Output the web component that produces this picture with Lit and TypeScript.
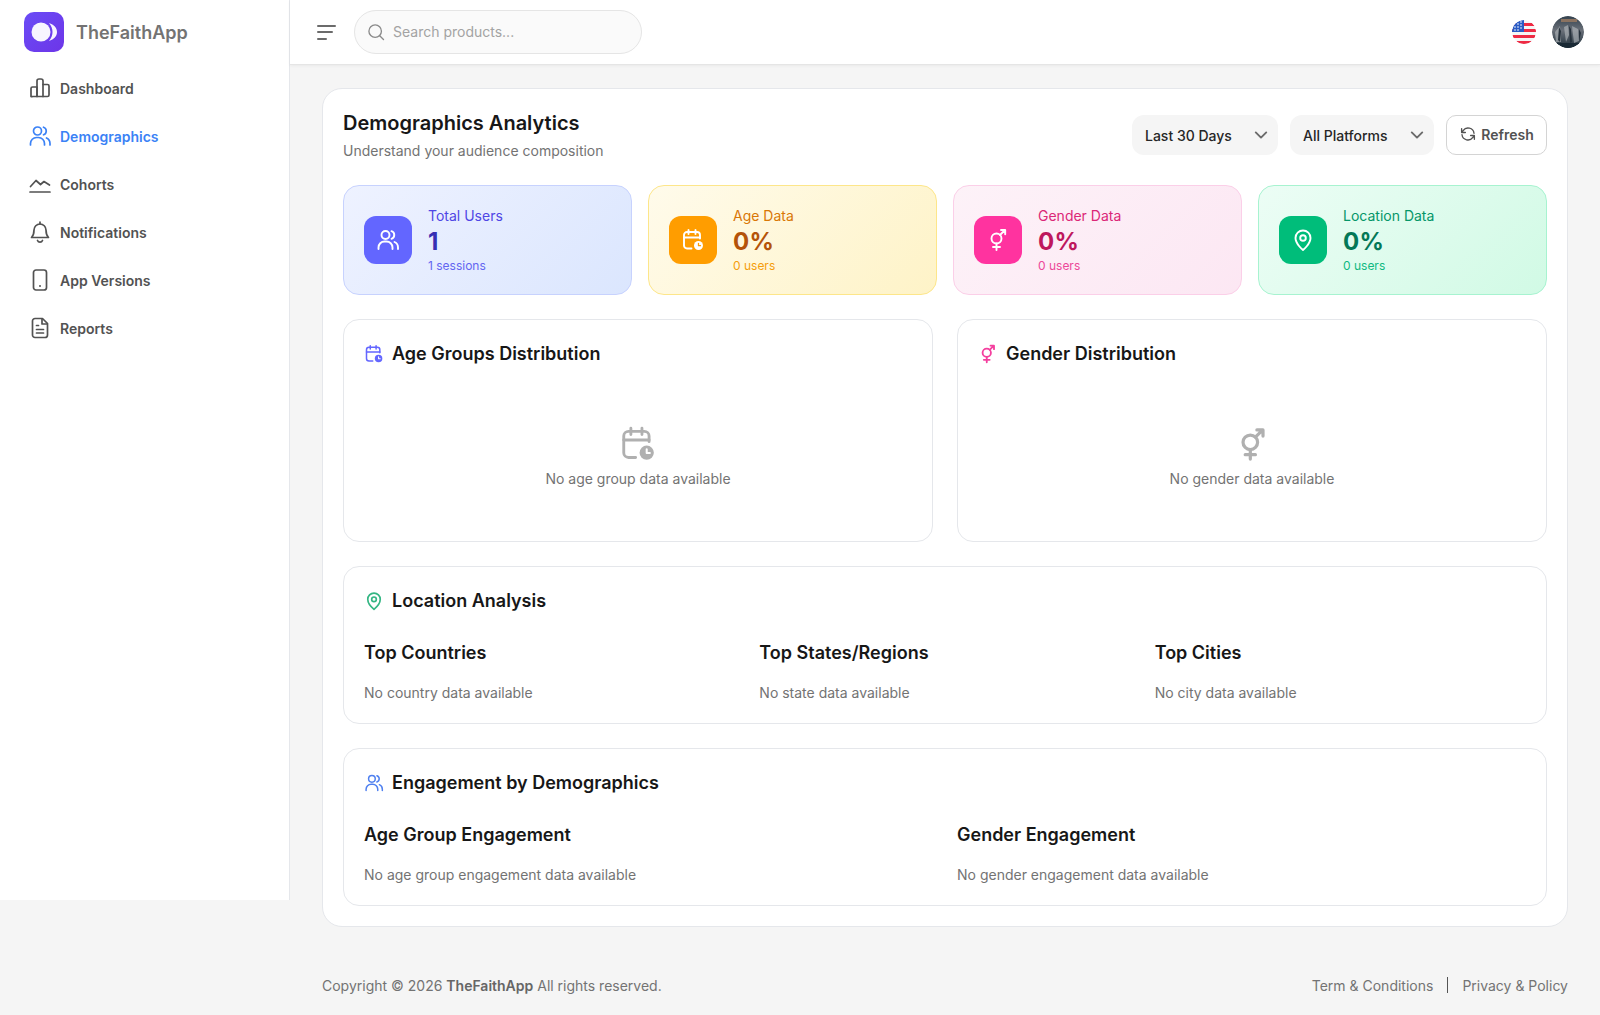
import { LitElement, html, css, svg } from "lit";
import { customElement } from "lit/decorators.js";

const ic = (body: unknown, size = 24, sw = 1.5, cls = "") => html`<svg class=${cls} width=${size} height=${size} viewBox="0 0 24 24" fill="none" stroke="currentColor" stroke-width=${sw} stroke-linecap="round" stroke-linejoin="round">${body}</svg>`;

const bars = svg`<path d="M3 20.5V12.5a1.5 1.5 0 0 1 1.5-1.5H9v9.5H4.500A1.500 1.500 0 0 1 3 20.500z"/><path d="M9 20.500V5a2 2 0 0 1 2-2h2a2 2 0 0 1 2 2v15.500z"/><path d="M15 8.500h4.500A1.500 1.500 0 0 1 21 10v9a1.500 1.500 0 0 1-1.500 1.500H15"/>`;
const users = svg`<circle cx="9.500" cy="7" r="4"/><path d="M2.500 21v-1.500a6 6 0 0 1 6-6h2a6 6 0 0 1 6 6V21"/><path d="M15.500 3.200a4 4 0 0 1 0 7.600"/><path d="M18.500 14a6 6 0 0 1 3.500 5.500V21"/>`;
const trend = svg`<path d="M2 20h20"/><path d="M2.500 14.500 8 8.500l4.500 4 3.500-3 5.500 3.500"/>`;
const bell = svg`<path d="M6 10a6 6 0 0 1 12 0c0 5 1.500 6.500 2.500 7.500h-17C4.500 16.500 6 15 6 10z"/><path d="M12 2v2"/><path d="M9.500 20.500a2.700 2.700 0 0 0 5 0"/>`;
const phone = svg`<rect x="5.500" y="2" width="13" height="20" rx="2.500"/><path d="M12 18h.01" stroke-width="2"/>`;
const report = svg`<path d="M14.500 2.500H7A2.500 2.500 0 0 0 4.500 5v14A2.500 2.500 0 0 0 7 21.500h10a2.500 2.500 0 0 0 2.500-2.500V7.500z"/><path d="M14 3v5h5"/><path d="M8.500 9.500h2M8.500 13.500h7M8.500 17h7"/>`;
const calClock = svg`<path d="M10.500 20.500H6a3 3 0 0 1-3-3V7a3 3 0 0 1 3-3h10a3 3 0 0 1 3 3v3.500"/><path d="M7.500 2v4M14.500 2v4M3 9.500h16"/><circle cx="17.500" cy="17.500" r="4.500" fill="currentColor" stroke="none"/><path d="M17.500 15.300v2.400h2" stroke="var(--hole,#fff)" stroke-width="1.300"/>`;
const gender = svg`<circle cx="10.500" cy="10.500" r="5"/><path d="M14 7l5-5M15 2h4.200v4.200M10.500 15.500V22M7 19h7"/>`;
const pin = svg`<path d="M12 22s-7.500-6-7.500-12a7.500 7.500 0 0 1 15 0c0 6-7.500 12-7.500 12z"/><circle cx="12" cy="10" r="2.800"/>`;
const refresh = svg`<path d="M20 11a8 8 0 0 0-14.500-3.500L3.500 10M3.500 5v5h5"/><path d="M4 13a8 8 0 0 0 14.500 3.500l2-2.500M20.500 19v-5h-5"/>`;
const search = svg`<circle cx="11" cy="11" r="7.500"/><path d="m21 21-4.500-4.500"/>`;
const chevron = svg`<path d="m5 8.500 7 7 7-7"/>`;

const NAV: [string, unknown, boolean][] = [
  ["Dashboard", bars, false],
  ["Demographics", users, true],
  ["Cohorts", trend, false],
  ["Notifications", bell, false],
  ["App Versions", phone, false],
  ["Reports", report, false],
];

const STATS = [
  { k: "blue", label: "Total Users", value: "1", sub: "1 sessions", icon: users },
  { k: "amber", label: "Age Data", value: "0%", sub: "0 users", icon: calClock },
  { k: "pink", label: "Gender Data", value: "0%", sub: "0 users", icon: gender },
  { k: "green", label: "Location Data", value: "0%", sub: "0 users", icon: pin },
];

@customElement("app-root")
export class AppRoot extends LitElement {
  static styles = css`
    :host { display: block; min-height: 1015px; background: #f5f5f5; font-family: Inter, "Liberation Sans", sans-serif; color: #111827; }
    * { box-sizing: border-box; }
    .app { display: grid; grid-template-columns: 290px 1fr; min-height: 1015px; }
    .side { height: 900px; background: #fff; border-right: 1px solid #e5e7eb; padding: 12px 0 0 24px; }
    .brand { display: flex; align-items: center; gap: 12px; height: 40px; font-size: 18px; font-weight: 600; color: #737373; }
    .logo { width: 40px; height: 40px; border-radius: 10px; background: linear-gradient(135deg, #6a4cf6, #6d35e8); display: block; }
    .nav { display: flex; flex-direction: column; margin-top: 12px; }
    .nav a { height: 48px; display: flex; align-items: center; gap: 8px; padding-left: 4px; font-size: 14px; font-weight: 600; color: #525252; }
    .nav a.on { color: #3b82f6; }
    .main { display: flex; flex-direction: column; min-width: 0; }
    .top { height: 65px; background: #fff; border-bottom: 1px solid #e5e5e5; box-shadow: 0 1px 3px rgba(0,0,0,.05); display: flex; align-items: center; padding: 0 16px 0 27px; gap: 18px; }
    .burger { display: flex; flex-direction: column; gap: 4.500px; width: 19px; }
    .burger i { display: block; height: 2px; border-radius: 1px; background: #6b6b6b; width: 100%; }
    .burger i:nth-child(2) { width: 84%; }
    .burger i:last-child { width: 50%; }
    .search { width: 288px; height: 44px; border-radius: 22px; background: #fafafa; border: 1px solid #e5e5e5; display: flex; align-items: center; gap: 7px; padding-left: 11px; color: #8a8a8a; font-size: 14px; }
    .search span { color: #a3a3a3; padding-bottom: 1px; }
    .right { margin-left: auto; display: flex; align-items: center; gap: 16px; }
    .round { display: block; border-radius: 50%; }
    .content { padding: 23px 32px 0; }
    .panel { background: #fff; border: 1px solid #e5e7eb; border-radius: 20px; padding: 20px; }
    .head { display: flex; justify-content: space-between; align-items: flex-start; margin-bottom: 24px; height: 52px; }
    h1 { margin: 0; font-size: 20px; line-height: 28px; font-weight: 600; color: #171717; }
    .head p { margin: 4px 0 0; font-size: 14px; line-height: 20px; color: #737373; }
    .controls { display: flex; gap: 12px; margin-top: 6px; }
    .sel { height: 40px; border-radius: 12px; background: #f5f5f5; display: flex; align-items: center; justify-content: space-between; padding: 0 8px 0 13px; font-size: 14px; font-weight: 500; color: #262626; }
    .sel.a { width: 146px; }
    .sel.b { width: 144px; }
    .sel svg { color: #6b6b6b; }
    .btn { width: 101px; height: 40px; border-radius: 10px; border: 1px solid #d4d4d4; background: #fff; display: flex; align-items: center; justify-content: center; gap: 4px; padding-bottom: 2px; font-size: 14px; font-weight: 600; color: #525252; }
    .stats { display: grid; grid-template-columns: repeat(4, 1fr); gap: 16px; margin-bottom: 24px; }
    .stat { height: 110px; border-radius: 16px; border: 1px solid; padding: 0 20px; display: flex; align-items: center; gap: 16px; }
    .box { width: 48px; height: 48px; border-radius: 12px; display: flex; align-items: center; justify-content: center; color: #fff; flex: none; --hole: #000; }
    .lab { font-size: 14px; line-height: 20px; }
    .val { font-size: 24px; line-height: 32px; font-weight: 700; letter-spacing: .3px; }
    .sub { font-size: 12px; line-height: 16px; }
    .blue { background: linear-gradient(135deg, #eef2ff, #dbe6fe); border-color: #c7d2fe; }
    .blue .box { background: #6366ff; --hole: #6366ff; } .blue .lab { color: #4f46e5; } .blue .val { color: #3730b3; } .blue .sub { color: #6366f1; }
    .amber { background: linear-gradient(135deg, #fffbeb, #fef3c7); border-color: #fde68a; }
    .amber .box { background: #ff9d00; --hole: #ff9d00; } .amber .lab { color: #d97706; } .amber .val { color: #b45309; } .amber .sub { color: #f59e0b; }
    .pink { background: linear-gradient(135deg, #fdf2f8, #fce7f3); border-color: #fbcfe8; }
    .pink .box { background: #ff339f; --hole: #ff339f; } .pink .lab { color: #db2777; } .pink .val { color: #be185d; } .pink .sub { color: #ec4899; }
    .green { background: linear-gradient(135deg, #ecfdf5, #d1fae5); border-color: #a7f3d0; }
    .green .box { background: #00bd7a; --hole: #00bd7a; } .green .lab { color: #059669; } .green .val { color: #047857; } .green .sub { color: #10b981; }
    .two { display: grid; grid-template-columns: 1fr 1fr; gap: 24px; }
    .card { background: #fff; border: 1px solid #e5e7eb; border-radius: 16px; padding: 20px; margin-bottom: 24px; }
    .card.last { margin-bottom: 0; }
    .card.chart { height: 223px; }
    h2 { margin: 0; display: flex; align-items: center; gap: 8px; font-size: 18px; line-height: 28px; font-weight: 600; color: #171717; height: 28px; }
    .c-blue { color: #6366ff; --hole: #fff; } .c-pink { color: #f43f9e; } .c-green { color: #34b683; } .c-sky { color: #4f80f0; }
    .ti { display: flex; }
    .empty { display: flex; flex-direction: column; align-items: center; margin-top: 57px; gap: 6px; color: #b0b0b0; --hole: #fff; }
    .empty span { font-size: 14px; line-height: 20px; color: #737373; }
    .empty .g { padding: 2px 0 0 0; height: 38px; display: block; }
    .cols3 { display: grid; grid-template-columns: repeat(3, 1fr); gap: 24px; margin-top: 24px; }
    .cols2 { display: grid; grid-template-columns: repeat(2, 1fr); gap: 24px; margin-top: 24px; }
    h3 { margin: 0 0 16px; font-size: 18px; line-height: 28px; font-weight: 600; color: #171717; }
    .none { font-size: 14px; line-height: 20px; color: #737373; }
    .foot { display: flex; justify-content: space-between; align-items: center; padding: 0 32px; margin-top: 48px; height: 20px; font-size: 14px; color: #737373; }
    .foot b { font-weight: 600; color: #666; }
    .links { display: flex; align-items: center; }
    .links i { width: 1px; height: 16px; background: #555; margin: 0 14px; }
  `;

  private flag() {
    return html`<svg class="round" width="24" height="24" viewBox="0 0 24 24">
      <defs><clipPath id="fc"><circle cx="12" cy="12" r="12"/></clipPath></defs>
      <g clip-path="url(#fc)">
        <rect width="24" height="24" fill="#f5f5f5"/>
        <rect y="3" width="24" height="3" fill="#ee2a44"/>
        <rect y="9" width="24" height="3" fill="#ee2a44"/>
        <rect y="15" width="24" height="3" fill="#ee2a44"/>
        <rect y="21" width="24" height="3" fill="#ee2a44"/>
        <rect width="12" height="12" fill="#2a5bc4"/>
        <g fill="#fff"><circle cx="3" cy="7" r=".8"/><circle cx="3" cy="10" r=".8"/><circle cx="6" cy="4" r=".8"/><circle cx="6" cy="7" r=".8"/><circle cx="6" cy="10" r=".8"/><circle cx="9" cy="2" r=".8"/><circle cx="9" cy="5" r=".8"/><circle cx="9" cy="8" r=".8"/></g>
      </g></svg>`;
  }

  private avatar() {
    return html`<svg class="round" width="32" height="32" viewBox="0 0 32 32">
      <defs>
        <clipPath id="ac"><circle cx="16" cy="16" r="16"/></clipPath>
        <linearGradient id="ag" x1="0" y1="0" x2="0" y2="1"><stop offset="0" stop-color="#33414d"/><stop offset=".45" stop-color="#6a7079"/><stop offset="1" stop-color="#1f2f3a"/></linearGradient>
      </defs>
      <g clip-path="url(#ac)">
        <rect width="32" height="32" fill="url(#ag)"/>
        <rect x="9" y="3" width="16" height="3" fill="#8a7260"/>
        <path d="M3 16l5-6 1 16H4zM12 11l4-2 1 10-3 7zM20 10l6 3 1 12-5 2z" fill="#b8bcc0" opacity=".6"/>
        <path d="M7 11l2 4-1 11-2-2zM17 10l2 3 1 13-2 1zM27 13l2 4-2 8z" fill="#27323c"/>
        <path d="M0 27h32v5H0z" fill="#1a2a35"/>
      </g></svg>`;
  }

  render() {
    return html`<div class="app">
      <aside class="side">
        <div class="brand">
          <svg class="logo" viewBox="0 0 40 40">
            <circle cx="17" cy="20" r="9.500" fill="#fff" fill-opacity=".95"/>
            <path d="M25 11C30 12.500 33 16 33 20S30 27.500 25 29C27.500 26 28.500 23 28.500 20S27.500 14 25 11z" fill="#fff" fill-opacity=".95"/>
          </svg>
          TheFaithApp
        </div>
        <nav class="nav">
          ${NAV.map(([t, i, on]) => html`<a class=${on ? "on" : ""}>${ic(i, 24, 1.7)}<span>${t}</span></a>`)}
        </nav>
      </aside>
      <div class="main">
        <header class="top">
          <div class="burger"><i></i><i></i><i></i></div>
          <div class="search">${ic(search, 20, 1.6)}<span>Search products...</span></div>
          <div class="right">${this.flag()}${this.avatar()}</div>
        </header>
        <div class="content">
          <section class="panel">
            <div class="head">
              <div><h1>Demographics Analytics</h1><p>Understand your audience composition</p></div>
              <div class="controls">
                <div class="sel a">Last 30 Days ${ic(chevron, 18, 2.5)}</div>
                <div class="sel b">All Platforms ${ic(chevron, 18, 2.5)}</div>
                <div class="btn">${ic(refresh, 18, 1.8)}Refresh</div>
              </div>
            </div>
            <div class="stats">
              ${STATS.map((s) => html`<div class="stat ${s.k}">
                <div class="box">${ic(s.icon, 24, 1.9)}</div>
                <div><div class="lab">${s.label}</div><div class="val">${s.value}</div><div class="sub">${s.sub}</div></div>
              </div>`)}
            </div>
            <div class="two">
              <div class="card chart">
                <h2><span class="c-blue ti">${ic(calClock, 20, 1.8)}</span>Age Groups Distribution</h2>
                <div class="empty">${ic(calClock, 38, 1.8)}<span>No age group data available</span></div>
              </div>
              <div class="card chart">
                <h2><span class="c-pink ti">${ic(gender, 20, 2.2)}</span>Gender Distribution</h2>
                <div class="empty"><div class="g">${ic(gender, 35, 2.2)}</div><span>No gender data available</span></div>
              </div>
            </div>
            <div class="card">
              <h2><span class="c-green ti">${ic(pin, 20, 2)}</span>Location Analysis</h2>
              <div class="cols3">
                <div><h3>Top Countries</h3><div class="none">No country data available</div></div>
                <div><h3>Top States/Regions</h3><div class="none">No state data available</div></div>
                <div><h3>Top Cities</h3><div class="none">No city data available</div></div>
              </div>
            </div>
            <div class="card last">
              <h2><span class="c-sky ti">${ic(users, 20, 1.8)}</span>Engagement by Demographics</h2>
              <div class="cols2">
                <div><h3>Age Group Engagement</h3><div class="none">No age group engagement data available</div></div>
                <div><h3>Gender Engagement</h3><div class="none">No gender engagement data available</div></div>
              </div>
            </div>
          </section>
        </div>
        <footer class="foot">
          <div>Copyright © 2026 <b>TheFaithApp</b> All rights reserved.</div>
          <div class="links"><span>Term &amp; Conditions</span><i></i><span>Privacy &amp; Policy</span></div>
        </footer>
      </div>
    </div>`;
  }
}
